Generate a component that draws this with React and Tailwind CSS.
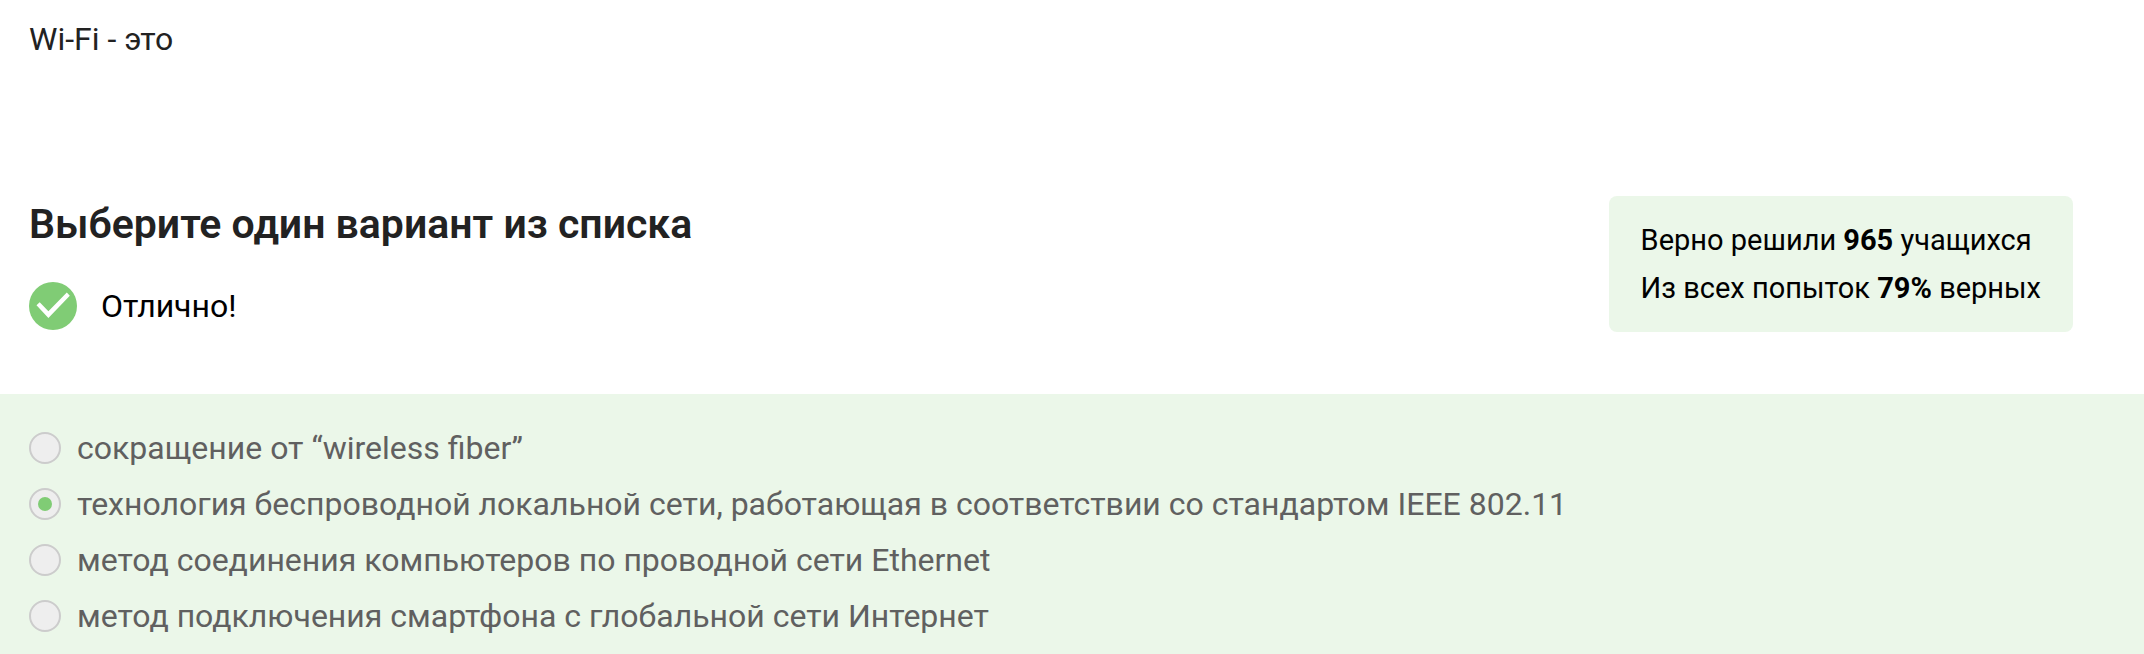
import { useState } from "react";

const options = [
  "сокращение от “wireless fiber”",
  "технология беспроводной локальной сети, работающая в соответствии со стандартом IEEE 802.11",
  "метод соединения компьютеров по проводной сети Ethernet",
  "метод подключения смартфона с глобальной сети Интернет",
];

function CheckIcon() {
  return (
    <svg viewBox="0 0 48 48" className="size-12 shrink-0" aria-hidden="true">
      <circle cx="24" cy="24" r="24" fill="#80cc75" />
      <path d="M7.5 23.3L10.7 20.2L19.4 29.2L37.8 10.6L40.8 13.8L19.4 36Z" fill="#fff" />
    </svg>
  );
}

function Stats() {
  return (
    <aside className="shrink-0 rounded-lg bg-[#ebf7e9] px-8 py-5 text-[29px] leading-12 text-black">
      <p>
        Верно решили <b>965</b> учащихся
      </p>
      <p>
        Из всех попыток <b>79%</b> верных
      </p>
    </aside>
  );
}

export default function App() {
  const [selected, setSelected] = useState(1);

  return (
    <main className="flex min-h-screen flex-col bg-white font-[Roboto,sans-serif] text-[32px] leading-12 text-[#222]">
      <p className="px-[29px] pt-[15px]">Wi-Fi - это</p>

      <section className="flex items-start justify-between pt-[133px] pr-[71px] pb-[62px] pl-[29px]">
        <div>
          <h2 id="question" className="text-[41px] leading-14 font-semibold">
            Выберите один вариант из списка
          </h2>
          <p className="mt-[30px] flex items-center gap-6 text-black">
            <CheckIcon />
            Отлично!
          </p>
        </div>
        <Stats />
      </section>

      <div
        role="radiogroup"
        aria-labelledby="question"
        className="flex grow flex-col gap-2 bg-[#ebf7e9] px-[29px] pt-[30px] text-[#606060]"
      >
        {options.map((text, i) => (
          <label key={text} className="flex items-center gap-4">
            <input
              type="radio"
              name="answer"
              checked={selected === i}
              onChange={() => setSelected(i)}
              className="grid size-8 shrink-0 appearance-none place-items-center rounded-full border-2 border-[#ccc] bg-[#eee] before:size-3.5 before:rounded-full checked:before:bg-[#80cc75]"
            />
            <span>{text}</span>
          </label>
        ))}
      </div>
    </main>
  );
}
